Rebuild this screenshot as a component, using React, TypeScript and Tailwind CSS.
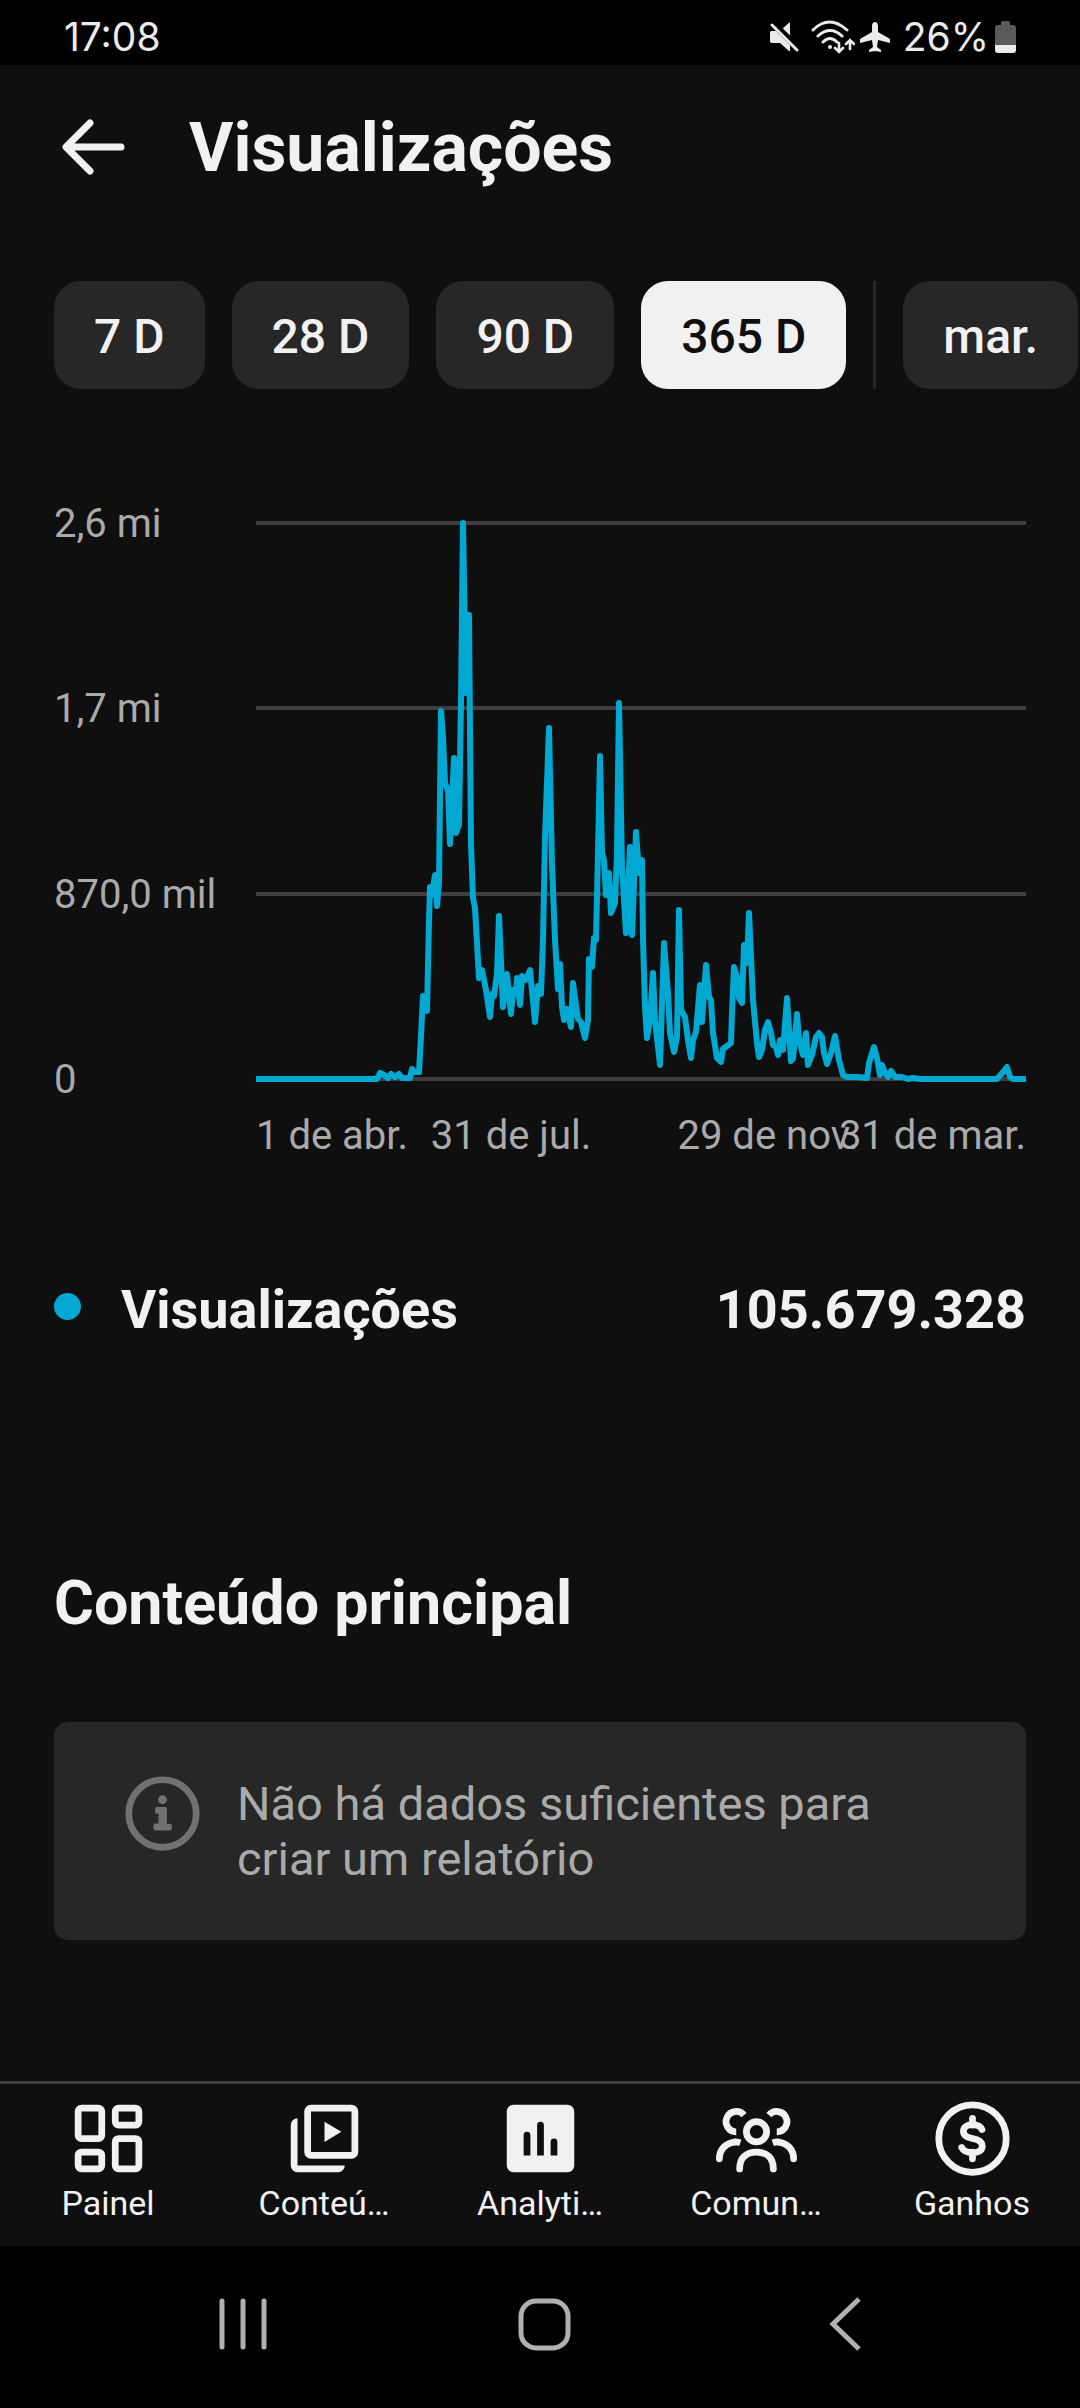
import { useState } from "react";

const periods = ["7 D", "28 D", "90 D", "365 D"];

const gridLines = [
    { y: 3, label: "2,6 mi" },
    { y: 188, label: "1,7 mi" },
    { y: 374, label: "870,0 mil" },
    { y: 559, label: "0" },
];

const viewsLine =
    "0,559 121,559 124,553 128,555 132,558 135,554 139,557 143,554 146,558 154,558 156,549 158,552 163,552 " +
    "165,516 167,476 171,491 173,401 174,367 176,375 179,355 181,386 183,363 185,191 187,217 189,263 192,271 " +
    "194,324 198,238 200,313 203,305 205,183 207,3 210,173 213,95 215,324 217,378 219,388 223,458 226,450 " +
    "230,470 234,497 236,474 238,476 241,454 243,396 247,487 251,454 255,494 257,470 260,474 261,458 264,485 " +
    "266,456 270,460 274,450 279,502 282,466 285,474 287,420 289,317 293,208 296,344 299,420 302,469 304,444 " +
    "306,487 308,500 311,489 315,507 317,463 320,485 322,499 325,502 329,518 332,500 333,439 336,447 338,418 " +
    "340,420 342,333 344,236 346,333 348,340 350,375 353,353 355,393 359,383 361,333 363,183 366,347 370,413 " +
    "374,327 376,415 380,312 383,353 386,340 387,420 389,487 391,518 394,500 397,453 399,500 404,545 408,423 " +
    "412,473 414,513 418,532 421,517 423,390 425,490 429,497 432,520 435,538 437,520 440,512 444,465 446,502 " +
    "450,445 453,477 455,480 457,513 461,538 465,542 467,529 471,526 475,523 476,493 478,447 481,457 483,478 " +
    "486,483 488,425 491,443 493,393 497,480 501,523 503,537 506,530 509,510 512,502 515,513 517,525 520,527 " +
    "522,535 524,520 527,530 531,478 535,541 537,539 541,494 543,520 547,535 550,513 552,545 556,535 560,517 " +
    "563,513 566,517 568,533 571,544 575,533 579,516 583,540 587,555 591,557 602,557 611,558 613,543 618,527 " +
    "621,538 624,555 626,545 629,553 632,557 635,551 639,557 646,557 652,559 657,558 664,559 741,559 747,552 " +
    "751,547 754,557 757,559 770,559";

const StatusBar = (): JSX.Element => {
    return (
        <div className="flex h-[65px] items-center justify-between bg-black pl-16 pr-16 pt-2 font-['Inter',sans-serif] text-[39px] leading-10 text-[#ebebeb]">
            <span>17:08</span>
            <div className="flex items-center">
                <svg className="h-[34px] w-[30px]" viewBox="0 0 30 34" fill="currentColor">
                    <path d="M21 2v15l-8-8zM2 11h5l14 14v6h-1l-9-8H3q-2 0-2-2v-8q0-2 1-2z" />
                    <path d="M2 4l27 27" stroke="#000" strokeWidth="5" transform="translate(2 -2)" />
                    <path d="M3 5l25 25" stroke="currentColor" strokeWidth="3" strokeLinecap="round" />
                </svg>
                <svg className="ml-3 h-[34px] w-[44px]" viewBox="0 0 44 34" fill="none" stroke="currentColor" strokeWidth="3" strokeLinecap="round">
                    <path d="M2 10q16-16 34 0M7 16q12-11 24 0M12 22q7-7 14 0" />
                    <circle cx="19" cy="27" r="2" fill="currentColor" stroke="none" />
                    <path d="M28 23v9m-4-4 4 4 4-4M39 29v-9m-4 4 4-4 4 4" strokeWidth="2.6" />
                </svg>
                <svg className="ml-1 h-[32px] w-[32px]" viewBox="0 0 32 32" fill="currentColor">
                    <path d="M16 1c2 0 3 2 3 4v6l12 7v4l-12-3-1 7 4 3v2l-6-1-6 1v-2l4-3-1-7-12 3v-4l12-7V5c0-2 1-4 3-4z" />
                </svg>
                <span className="ml-3">26%</span>
                <svg className="ml-[6px] h-[32px] w-[21px]" viewBox="0 0 21 32">
                    <path d="M6 2q0-2 2-2h5q2 0 2 2v2h3q3 0 3 3v18H0V7q0-3 3-3h3z" fill="#5a5a5a" />
                    <path d="M0 24h21v5q0 3-3 3H3q-3 0-3-3z" fill="#ebebeb" />
                </svg>
            </div>
        </div>
    );
};

const Header = (): JSX.Element => {
    return (
        <header className="flex h-[162px] items-center pl-[54px]">
            <button type="button" aria-label="Voltar">
                <svg className="size-[81px]" viewBox="0 0 81 81" fill="none" stroke="currentColor" strokeWidth="7" strokeLinecap="round" strokeLinejoin="round">
                    <path d="M36 17 12 41l24 24M13 41h54" />
                </svg>
            </button>
            <h1 className="ml-[54px] pt-1 text-[68px] font-bold leading-20">Visualizações</h1>
        </header>
    );
};

const PeriodChips = (): JSX.Element => {
    const [selected, setSelected] = useState("365 D");
    const chip = "h-[108px] shrink-0 rounded-[27px] px-10 pt-1 text-[48px] font-medium leading-14";

    return (
        <div className="-mr-[54px] mt-[54px] flex gap-[27px] overflow-hidden">
            {periods.map((period) => (
                <button
                    key={period}
                    type="button"
                    aria-pressed={selected === period}
                    onClick={() => setSelected(period)}
                    className={`${chip} ${selected === period ? "bg-[#f1f1f1] text-[#0f0f0f]" : "bg-[#272727]"}`}
                >
                    {period}
                </button>
            ))}
            <span className="w-[3px] shrink-0 bg-[#272727]" />
            <button type="button" className={`${chip} bg-[#272727]`}>
                mar.
            </button>
        </div>
    );
};

const ViewsChart = (): JSX.Element => {
    return (
        <svg className="mt-[104px] w-full text-[40px]" viewBox="0 -10 972 672" fill="#aaaaaa" role="img" aria-label="Visualizações">
            {gridLines.map((line) => (
                <g key={line.label}>
                    <text x="0" y={line.y + 31}>{line.label}</text>
                    <path d={`M202 ${line.y + 17}h770`} stroke="#3f3f3f" strokeWidth="4" />
                </g>
            ))}
            <polyline
                points={viewsLine}
                transform="translate(202 17)"
                fill="none"
                stroke="#00a8d2"
                strokeWidth="6"
                strokeLinejoin="round"
            />
            <text x="202" y="646">1 de abr.</text>
            <text x="457" y="646" textAnchor="middle">31 de jul.</text>
            <text x="714" y="646" textAnchor="middle">29 de nov.</text>
            <text x="972" y="646" textAnchor="end">31 de mar.</text>
        </svg>
    );
};

const EmptyReport = (): JSX.Element => {
    return (
        <div className="mt-[83px] flex items-start gap-[34px] rounded-[14px] bg-[#272727] pb-[54px] pl-[68px] pr-[68px] pt-[51px]">
            <svg className="size-[81px] shrink-0 text-[#717171]" viewBox="0 0 24 24" fill="currentColor">
                <circle cx="12" cy="12" r="10" fill="none" stroke="currentColor" strokeWidth="2" />
                <circle cx="12" cy="7.9" r="1.3" />
                <path d="M10.3 10.1h2.5q.5 0 .5.5V15h.9q.6 0 .6.6v.8q0 .6-.6.6H9.900q-.6 0-.6-.6v-.8q0-.6.6-.6h.9v-2.900h-.5q-.5 0-.5-.5v-1q0-.5.5-.5z" />
            </svg>
            <p className="pt-[3px] text-[47px] leading-[55px] text-[#aaaaaa]">
                Não há dados suficientes para criar um relatório
            </p>
        </div>
    );
};

const tabs = [
    {
        label: "Painel",
        icon: (
            <g fill="none" stroke="currentColor" strokeWidth="2">
                <rect x="3" y="3" width="7" height="9" rx="1" />
                <rect x="14" y="3" width="7" height="5" rx="1" />
                <rect x="14" y="12" width="7" height="9" rx="1" />
                <rect x="3" y="16" width="7" height="5" rx="1" />
            </g>
        ),
    },
    {
        label: "Conteú…",
        icon: (
            <g fill="currentColor">
                <rect x="7" y="3" width="14" height="14" rx="1" fill="none" stroke="currentColor" strokeWidth="2" />
                <path d="M12 7l5 3-5 3zM4 6a2 2 0 0 0-2 2v12a2 2 0 0 0 2 2h12a2 2 0 0 0 2-2H4z" />
            </g>
        ),
    },
    {
        label: "Analyti…",
        icon: (
            <g>
                <rect x="2" y="2" width="20" height="20" rx="2" fill="currentColor" />
                <path d="M7 17v-6a1 1 0 0 1 2 0v6zM11 17V8a1 1 0 0 1 2 0v9zM15 17v-4a1 1 0 0 1 2 0v4z" fill="#0f0f0f" />
            </g>
        ),
    },
    {
        label: "Comun…",
        icon: (
            <g fill="none" stroke="currentColor" strokeWidth="2">
                <circle cx="12" cy="10" r="3" />
                <path d="M7 21c0-3.300 2-5 5-5s5 1.700 5 5M1 18c0-2.800 2-4.700 4.500-4.950M23 18c0-2.800-2-4.700-4.500-4.950" strokeLinecap="round" />
                <path d="M5.300 13.060Q6.200 12.950 7.200 13.300M18.700 13.060Q17.800 12.950 16.800 13.300" />
                <path d="M8.300 5.100A3 3 0 1 0 6 10M15.700 5.100A3 3 0 1 1 18 10" />
            </g>
        ),
    },
    {
        label: "Ganhos",
        icon: (
            <g fill="none" stroke="currentColor" strokeWidth="2" strokeLinecap="round">
                <circle cx="12" cy="12" r="10" />
                <path d="M12 6v2M12 16v2M14.800 9.300C14.300 8.300 13.300 7.900 12 7.900c-1.600 0-2.700.7-2.700 2 0 1.400 1.200 1.800 2.700 2.100 1.600.3 2.900.8 2.900 2.200s-1.300 2-2.900 2c-1.500 0-2.700-.5-3.200-1.500" />
            </g>
        ),
    },
];

const TabBar = (): JSX.Element => {
    return (
        <nav className="flex border-t-[3px] border-[#3f3f3f] pb-[23px] pt-[14px]">
            {tabs.map((tab) => (
                <a key={tab.label} href="#" className="flex flex-1 flex-col items-center gap-1 text-[34px] leading-10">
                    <svg className="size-[81px] overflow-visible" viewBox="0 0 24 24">
                        {tab.icon}
                    </svg>
                    {tab.label}
                </a>
            ))}
        </nav>
    );
};

const SystemBar = (): JSX.Element => {
    return (
        <div className="flex h-[162px] items-center bg-black pb-[6px] pl-[92px] pr-[84px] text-[#b0b0b0]">
            <button type="button" aria-label="Recentes" className="flex flex-1 justify-center">
                <svg className="size-[54px]" viewBox="0 0 54 54" stroke="currentColor" strokeWidth="5" strokeLinecap="round">
                    <path d="M6 4v46M27 4v46M48 4v46" />
                </svg>
            </button>
            <button type="button" aria-label="Início" className="flex flex-1 justify-center">
                <svg className="size-[54px]" viewBox="0 0 54 54" fill="none" stroke="currentColor" strokeWidth="5">
                    <rect x="4" y="4" width="47" height="47" rx="15" />
                </svg>
            </button>
            <button type="button" aria-label="Voltar" className="flex flex-1 justify-center">
                <svg className="size-[54px]" viewBox="0 0 54 54" fill="none" stroke="currentColor" strokeWidth="5">
                    <path d="M41 2 15 27l26 25" />
                </svg>
            </button>
        </div>
    );
};

const App = (): JSX.Element => {
    return (
        <div className="flex min-h-screen flex-col bg-[#0f0f0f] font-['Roboto',sans-serif] text-[#f1f1f1]">
            <StatusBar />
            <Header />
            <main className="flex-1 px-[54px] pb-16">
                <PeriodChips />
                <ViewsChart />
                <div className="mt-[113px] flex items-center text-[54px] font-bold leading-16">
                    <span className="mb-2 size-[27px] rounded-full bg-[#00a8d2]" />
                    <span className="ml-10">Visualizações</span>
                    <span className="ml-auto">105.679.328</span>
                </div>
                <h2 className="mt-[225px] text-[61px] font-bold leading-18">Conteúdo principal</h2>
                <EmptyReport />
            </main>
            <TabBar />
            <SystemBar />
        </div>
    );
};

export default App;
